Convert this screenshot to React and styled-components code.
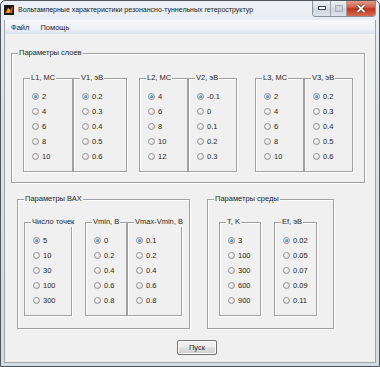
import React from 'react';
import styled, { createGlobalStyle } from 'styled-components';

const GlobalStyle = createGlobalStyle`
	html, body {
		margin: 0;
		padding: 0;
		background: #ffffff;
	}
	body {
		font-family: "Liberation Sans", Arial, sans-serif;
		color: #262626;
	}
`;

const Window = styled.div`
	width: 380px;
	height: 367px;
	box-sizing: border-box;
	display: flex;
	flex-direction: column;
	border: 1px solid #50555c;
	border-radius: 5px 5px 0 0;
	background: linear-gradient(#eceff3, #dce1e7 30%, #d5dbe2);
	overflow: hidden;
`;

const TitleBar = styled.div`
	height: 19px;
	flex: none;
	display: flex;
	align-items: flex-start;
	padding-left: 2px;
`;

const AppIcon = styled.svg`
	margin: 4px 4px 0 1px;
	flex: none;
`;

const TitleText = styled.div`
	font-size: 7px;
	line-height: 10px;
	margin-top: 4px;
	color: #1a1a1a;
	white-space: nowrap;
	flex: 1;
`;

const Caption = styled.div`
	display: flex;
	margin-right: 3px;
	margin-top: -1px;
	border: 1px solid #8a929c;
	border-top: none;
	border-radius: 0 0 4px 4px;
	overflow: hidden;
`;

const CaptionButton = styled.div`
	width: ${(p) => p.$w}px;
	height: 16px;
	display: flex;
	align-items: center;
	justify-content: center;
	background: ${(p) =>
		p.$close
			? 'linear-gradient(#e6a394, #d3624c 45%, #c0341c 55%, #d46a50)'
			: 'linear-gradient(#eef1f5, #dde2e8 45%, #cfd5dd 55%, #dde3ea)'};
	border-left: ${(p) => (p.$first ? 'none' : '1px solid #9aa2ac')};
`;

const Frame = styled.div`
	flex: 1;
	display: flex;
	padding: 0 3px 3px 3px;
`;

const Inner = styled.div`
	flex: 1;
	display: flex;
	flex-direction: column;
	border: 1px solid #9ca3ac;
	border-top: none;
`;

const MenuBar = styled.div`
	height: 14px;
	flex: none;
	display: flex;
	align-items: center;
	gap: 11px;
	padding-left: 6px;
	background: linear-gradient(#f8f9fc, #eef1f8 60%, #dbe2ef);
	font-size: 7.5px;
`;

const Client = styled.div`
	flex: 1;
	background: #f0f0f0;
	display: flex;
	flex-direction: column;
	align-items: flex-start;
`;

const Row = styled.div`
	display: flex;
	align-items: flex-start;
	margin-top: ${(p) => p.$mt || 0}px;
`;

const Panel = styled.div`
	position: relative;
	box-sizing: border-box;
	flex: none;
	display: flex;
	align-items: flex-start;
	width: ${(p) => p.$w}px;
	height: ${(p) => p.$h}px;
	margin-left: ${(p) => p.$ml || 0}px;
	margin-top: ${(p) => p.$mt || 0}px;
	padding: ${(p) => p.$pt || 0}px 0 0 ${(p) => p.$pl || 0}px;
	border: 1px solid #a0a0a0;
	box-shadow: inset 1px 1px 0 #ffffff, 1px 1px 0 #ffffff;
`;

const Legend = styled.span`
	position: absolute;
	top: -6px;
	left: 6px;
	padding: 0 1px;
	background: #f0f0f0;
	font-size: 7.5px;
	line-height: 10px;
	white-space: nowrap;
`;

const RadioList = styled.div`
	display: flex;
	flex-direction: column;
	padding: 10px 0 0 8px;
`;

const RadioRow = styled.div`
	height: 15px;
	display: flex;
	align-items: center;
	gap: 3px;
	font-size: 7.5px;
`;

const RadioDot = styled.span`
	width: 7px;
	height: 7px;
	box-sizing: border-box;
	border-radius: 50%;
	border: 1px solid #939393;
	background: radial-gradient(circle at 35% 35%, #ffffff, #d8d8d8 80%);
	display: flex;
	align-items: center;
	justify-content: center;

	&::after {
		content: '';
		width: 3px;
		height: 3px;
		border-radius: 50%;
		background: ${(p) =>
			p.$on ? 'radial-gradient(circle at 40% 40%, #8fd0ff, #0d4f9c)' : 'transparent'};
	}
`;

const Button = styled.div`
	box-sizing: border-box;
	width: 40px;
	height: 15px;
	margin: 11px 0 0 172px;
	border: 1px solid #707070;
	border-radius: 2px;
	background: linear-gradient(#f3f3f3, #ebebeb 45%, #dddddd 55%, #cfcfcf);
	box-shadow: inset 0 0 0 1px #fcfcfc;
	display: flex;
	align-items: center;
	justify-content: center;
	font-size: 7.5px;
`;

const Group = ({ title, w, h, ml, mt, values }) => (
	<Panel $w={w} $h={h} $ml={ml} $mt={mt}>
		<Legend>{title}</Legend>
		<RadioList>
			{values.map((v, i) => (
				<RadioRow key={v}>
					<RadioDot $on={i === 0} />
					{v}
				</RadioRow>
			))}
		</RadioList>
	</Panel>
);

const layers = [
	{ title: 'L1, МС', w: 50, values: ['2', '4', '6', '8', '10'] },
	{ title: 'V1, эВ', w: 54, values: ['0.2', '0.3', '0.4', '0.5', '0.6'] },
	{ title: 'L2, МС', w: 49, ml: 12, values: ['4', '6', '8', '10', '12'] },
	{ title: 'V2, эВ', w: 49, values: ['-0.1', '0', '0.1', '0.2', '0.3'] },
	{ title: 'L3, МС', w: 49, ml: 18, values: ['2', '4', '6', '8', '10'] },
	{ title: 'V3, эВ', w: 49, values: ['0.2', '0.3', '0.4', '0.5', '0.6'] },
];

const vax = [
	{ title: 'Число точек', w: 48, values: ['5', '10', '30', '100', '300'] },
	{ title: 'Vmin, В', w: 42, ml: 13, values: ['0', '0.2', '0.4', '0.6', '0.8'] },
	{ title: 'Vmax-Vmin, В', w: 55, values: ['0.1', '0.2', '0.4', '0.6', '0.8'] },
];

const medium = [
	{ title: 'T, K', w: 42, values: ['3', '100', '300', '600', '900'] },
	{ title: 'Ef, эВ', w: 43, ml: 13, values: ['0.02', '0.05', '0.07', '0.09', '0.11'] },
];

const App = () => (
	<>
		<GlobalStyle />
		<Window>
			<TitleBar>
				<AppIcon width="10" height="10" viewBox="0 0 10 10">
					<rect width="10" height="10" fill="#1b1b1b" />
					<path d="M1 8 L4 3 L6 5 L9 1 L8 8 Z" fill="#e0591b" />
					<path d="M4 3 L6 5 L5 8 L3 8 Z" fill="#f4b52a" />
				</AppIcon>
				<TitleText>Вольтамперные характеристики резонансно-туннельных гетероструктур</TitleText>
				<Caption>
					<CaptionButton $w={17} $first>
						<svg width="8" height="4" viewBox="0 0 8 4">
							<rect x="0.5" y="0.5" width="7" height="3" fill="#ffffff" stroke="#3b4450" />
						</svg>
					</CaptionButton>
					<CaptionButton $w={15}>
						<svg width="8" height="7" viewBox="0 0 8 7">
							<rect x="0.5" y="0.5" width="7" height="6" fill="none" stroke="#a8b0ba" />
							<rect x="1.5" y="2" width="5" height="3.5" fill="none" stroke="#c4cad2" />
						</svg>
					</CaptionButton>
					<CaptionButton $w={28} $close>
						<svg width="10" height="9" viewBox="0 0 10 9">
							<path d="M1.5 1 L8.5 8 M8.5 1 L1.5 8" stroke="#4a2a25" strokeWidth="3.2" />
							<path d="M1.5 1 L8.5 8 M8.5 1 L1.5 8" stroke="#ffffff" strokeWidth="1.8" />
						</svg>
					</CaptionButton>
				</Caption>
			</TitleBar>
			<Frame>
				<Inner>
					<MenuBar>
						<span>Файл</span>
						<span>Помощь</span>
					</MenuBar>
					<Client>
						<Panel $w={354} $h={130} $ml={6} $mt={19} $pt={24} $pl={11}>
							<Legend>Параметры слоев</Legend>
							{layers.map((g) => (
								<Group key={g.title} {...g} h={94} />
							))}
						</Panel>
						<Row $mt={16}>
							<Panel $w={173} $h={130} $ml={12} $pt={22} $pl={6}>
								<Legend>Параметры ВАХ</Legend>
								{vax.map((g) => (
									<Group key={g.title} {...g} h={94} />
								))}
							</Panel>
							<Panel $w={127} $h={130} $ml={17} $pt={22} $pl={11}>
								<Legend>Параметры среды</Legend>
								{medium.map((g) => (
									<Group key={g.title} {...g} h={94} />
								))}
							</Panel>
						</Row>
						<Button>Пуск</Button>
					</Client>
				</Inner>
			</Frame>
		</Window>
	</>
);

export default App;
